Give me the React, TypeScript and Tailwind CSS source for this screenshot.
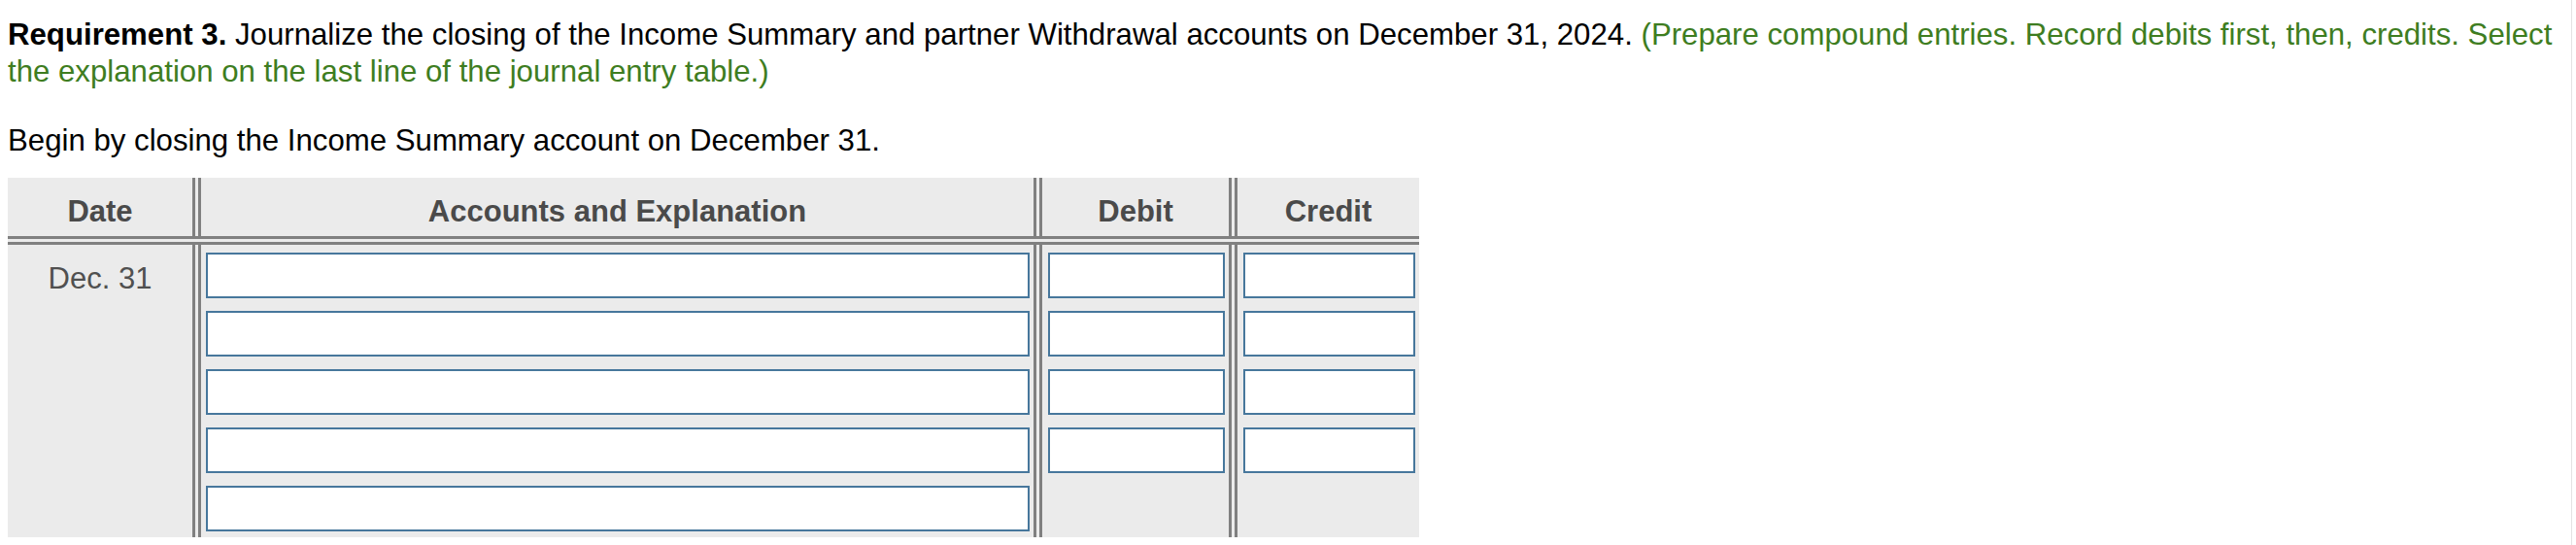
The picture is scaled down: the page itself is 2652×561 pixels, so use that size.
import React from "react";

const ROWS = [true, true, true, true, false];

const Field = () => (
  <input
    type="text"
    className="block h-[47px] w-full border-2 border-[#47779c] bg-white outline-none"
  />
);

const Blank = () => <div className="h-[47px]" />;

export default function App() {
  return (
    <div className="min-h-[561px] w-[2652px] bg-white font-['Liberation_Sans',Arial,sans-serif]">
      <div className="w-[2648px] border-r border-[#e3e3e3] pl-[8px] pt-[17px] pb-[8px]">
        <p className="w-[2638px] text-[31.2px] leading-[38px] text-black">
          <span className="font-bold">Requirement 3.</span> Journalize the closing of the Income
          Summary and partner Withdrawal accounts on December 31, 2024.{" "}
          <span className="text-[#3e7d21]">
            (Prepare compound entries. Record debits first, then, credits. Select the explanation on
            the last line of the journal entry table.)
          </span>
        </p>
        <p className="mt-[33px] text-[31.2px] leading-[38px] text-black">
          Begin by closing the Income Summary account on December 31.
        </p>

        <div className="mt-[19px] w-[1453px] bg-[#ebebeb] text-[31px] text-[#4a4a4a]">
          <div className="flex h-[69px] border-b-[9px] border-double border-[#808080] font-bold leading-[34px]">
            <div className="w-[199px] border-r-[9px] border-double border-[#808080] pt-[18px] text-center">
              Date
            </div>
            <div className="w-[866px] border-r-[9px] border-double border-[#808080] pt-[18px] text-center">
              Accounts and Explanation
            </div>
            <div className="w-[201px] border-r-[9px] border-double border-[#808080] pt-[18px] text-center">
              Debit
            </div>
            <div className="w-[187px] pt-[18px] text-center">Credit</div>
          </div>

          <div className="flex">
            <div className="w-[199px] border-r-[9px] border-double border-[#808080] pt-[18px] text-center leading-[34px] text-[#505050]">
              Dec. 31
            </div>
            <div className="flex w-[866px] flex-col gap-[13px] border-r-[9px] border-double border-[#808080] pt-[8px] pb-[6px] pl-[5px] pr-[4px]">
              {ROWS.map((_, i) => (
                <Field key={i} />
              ))}
            </div>
            <div className="flex w-[201px] flex-col gap-[13px] border-r-[9px] border-double border-[#808080] pt-[8px] pb-[6px] pl-[6px] pr-[4px]">
              {ROWS.map((amt, i) => (amt ? <Field key={i} /> : <Blank key={i} />))}
            </div>
            <div className="flex w-[187px] flex-col gap-[13px] pt-[8px] pb-[6px] pl-[6px] pr-[4px]">
              {ROWS.map((amt, i) => (amt ? <Field key={i} /> : <Blank key={i} />))}
            </div>
          </div>
        </div>
      </div>
    </div>
  );
}
